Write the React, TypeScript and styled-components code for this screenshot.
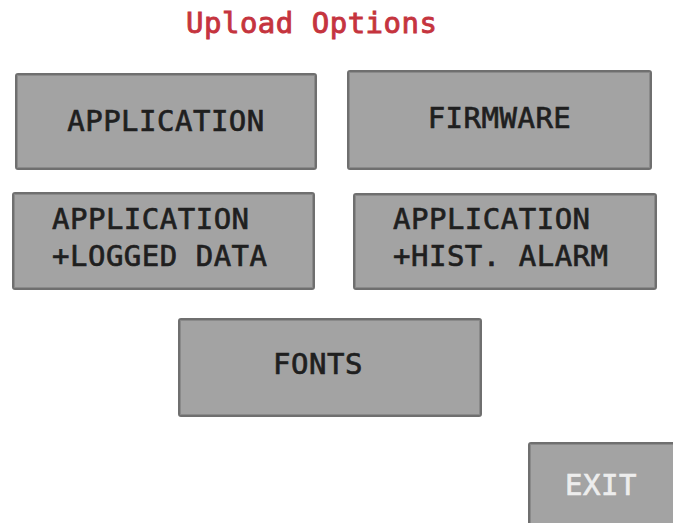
import React from "react";
import styled, { createGlobalStyle } from "styled-components";

const GlobalStyle = createGlobalStyle`
  html, body {
    margin: 0;
    padding: 0;
    background: #ffffff;
  }
`;

const Screen = styled.div`
  width: 673px;
  height: 523px;
  overflow: hidden;
  background: #ffffff;
  display: flex;
  flex-direction: column;
  font-family: "DejaVu Sans Mono", "Liberation Mono", monospace;
`;

const Title = styled.h1`
  margin: 0;
  padding: 5px 0 0 186px;
  height: 41px;
  box-sizing: border-box;
  font-size: 29px;
  line-height: 37px;
  letter-spacing: 0.5px;
  font-weight: normal;
  -webkit-text-stroke: 0.9px #c5343e;
  color: #c5343e;
  white-space: pre;
`;

const Row = styled.div<{ $left: number; $gap: number; $top: number }>`
  display: flex;
  align-items: flex-start;
  padding-left: ${(p) => p.$left}px;
  margin-top: ${(p) => p.$top}px;
  gap: ${(p) => p.$gap}px;
`;

const Button = styled.button<{
  $w: number;
  $h: number;
  $dy?: number;
  $padL?: number;
  $padT?: number;
  $padR?: number;
  $padB?: number;
  $light?: boolean;
}>`
  box-sizing: border-box;
  width: ${(p) => p.$w}px;
  height: ${(p) => p.$h}px;
  margin-top: ${(p) => p.$dy ?? 0}px;
  flex-shrink: 0;
  display: flex;
  flex-direction: column;
  justify-content: ${(p) => (p.$padT !== undefined ? "flex-start" : "center")};
  align-items: ${(p) => (p.$padL !== undefined ? "flex-start" : "center")};
  padding: ${(p) => p.$padT ?? 0}px ${(p) => p.$padR ?? 0}px
    ${(p) => p.$padB ?? 0}px ${(p) => p.$padL ?? 0}px;
  background: #a3a3a3;
  border: 2px solid #6f6f6f;
  border-radius: 3px;
  box-shadow: inset 0 0 0 1px #8a8a8a;
  font-family: inherit;
  font-size: 29px;
  line-height: 37px;
  letter-spacing: 0.5px;
  font-weight: normal;
  color: ${(p) => (p.$light ? "#ededed" : "#1f1f1f")};
  -webkit-text-stroke: 0.7px ${(p) => (p.$light ? "#ededed" : "#1f1f1f")};
  white-space: pre;
  cursor: pointer;
`;

const ExitRow = styled.div`
  display: flex;
  justify-content: flex-start;
  padding-left: 528px;
  margin-top: 25px;
`;

export default function App() {
  return (
    <>
      <GlobalStyle />
      <Screen>
        <Title>Upload Options</Title>
        <Row $left={15} $gap={30} $top={29}>
          <Button $w={302} $h={97} $dy={3}>
            APPLICATION
          </Button>
          <Button $w={305} $h={100} $padB={4}>
            FIRMWARE
          </Button>
        </Row>
        <Row $left={12} $gap={38} $top={22}>
          <Button $w={303} $h={98} $padL={38} $padT={7}>
            <span>APPLICATION</span>
            <span>+LOGGED DATA</span>
          </Button>
          <Button $w={304} $h={97} $dy={1} $padL={38} $padT={6}>
            <span>APPLICATION</span>
            <span>+HIST. ALARM</span>
          </Button>
        </Row>
        <Row $left={178} $gap={0} $top={28}>
          <Button $w={304} $h={99} $padR={24} $padB={6}>
            FONTS
          </Button>
        </Row>
        <ExitRow>
          <Button $w={160} $h={100} $padL={35} $padT={23} $light>
            EXIT
          </Button>
        </ExitRow>
      </Screen>
    </>
  );
}
